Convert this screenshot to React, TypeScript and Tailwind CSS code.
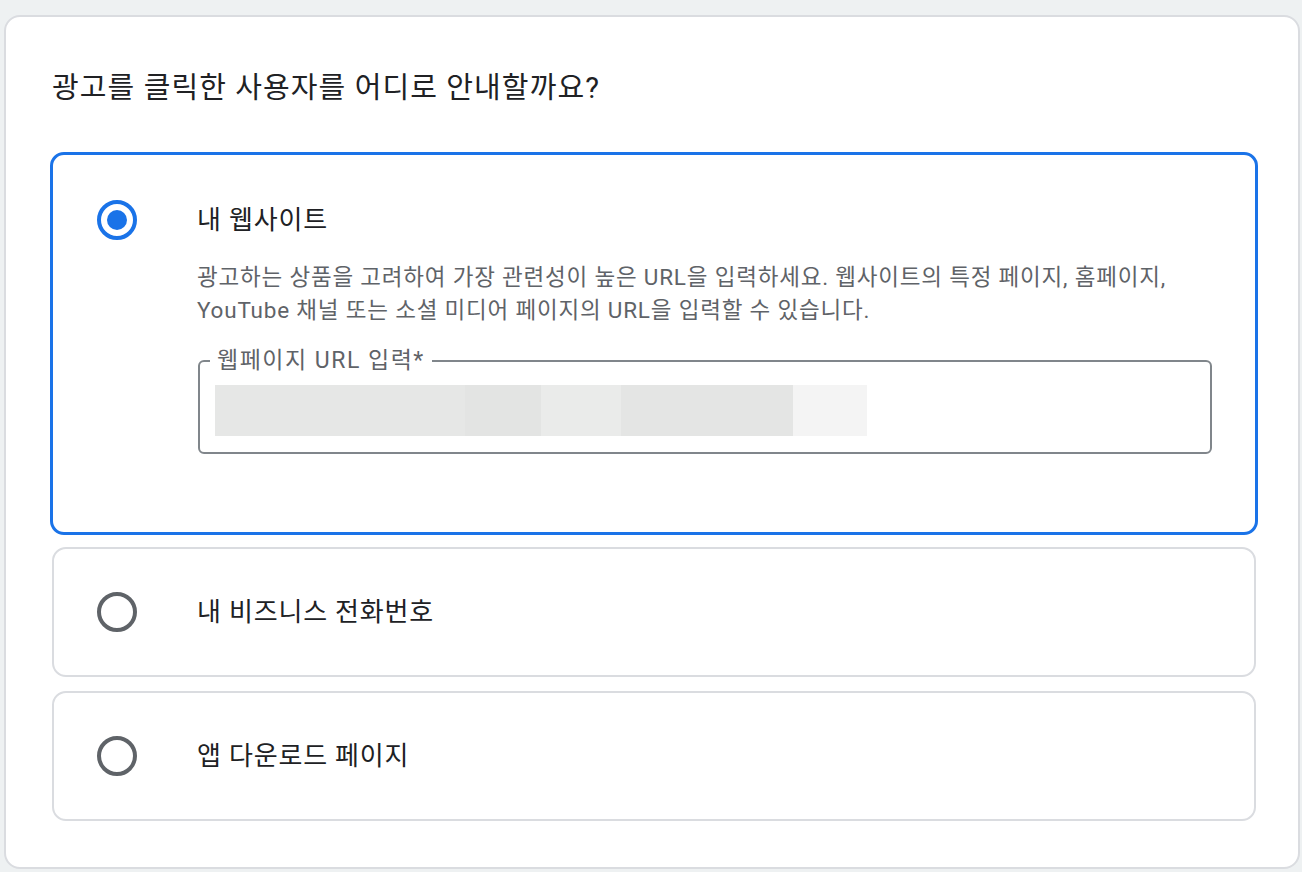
const FONT = { fontFamily: 'Roboto, "Noto Sans CJK KR", sans-serif' };

function Radio({ checked }: { checked: boolean }) {
  return checked ? (
    <span className="flex h-10 w-10 shrink-0 items-center justify-center rounded-full border-4 border-[#1a73e8]">
      <span className="h-5 w-5 rounded-full bg-[#1a73e8]" />
    </span>
  ) : (
    <span className="h-10 w-10 shrink-0 rounded-full border-4 border-[#5f6368]" />
  );
}

function Option({ label }: { label: string }) {
  return (
    <div className="mx-[2px] flex h-[130px] items-center rounded-[14px] border-2 border-[#dadce0] pl-[43px]">
      <Radio checked={false} />
      <span className="ml-[60px] text-[26px] tracking-[0.8px] text-[#202124]">{label}</span>
    </div>
  );
}

export default function App() {
  return (
    <div className="min-h-[872px] bg-[#eef1f2] pl-[4px] pr-[2px] pt-[15px]" style={FONT}>
      <div className="rounded-[16px] border-2 border-[#dadce0] bg-white pb-[46px] pl-[44px] pr-[40px] pt-[55px]">
        <h2 className="pl-[2px] text-[29px] leading-[32px] tracking-[1.1px] text-[#202124]">
          광고를 클릭한 사용자를 어디로 안내할까요?
        </h2>

        <div className="mt-[48px] flex flex-col gap-[12px]">
          <div className="flex rounded-[14px] border-[3px] border-[#1a73e8] pb-[78px] pl-[44px] pr-[43px] pt-[45px]">
            <Radio checked />
            <div className="ml-[60px] flex flex-1 flex-col">
              <span className="text-[26px] leading-[40px] tracking-[0.8px] text-[#202124]">내 웹사이트</span>
              <p className="mt-[21px] whitespace-nowrap text-[22.5px] leading-[33px] tracking-[0.8px] text-[#5f6368]">
                광고하는 상품을 고려하여 가장 관련성이 높은 URL을 입력하세요. 웹사이트의 특정 페이지, 홈페이지,
                <br />
                YouTube 채널 또는 소셜 미디어 페이지의 URL을 입력할 수 있습니다.
              </p>
              <div className="relative ml-[1px] mt-[33px] h-[94px] rounded-[6px] border-2 border-[#80868b] pl-[15px] pt-[23px]">
                <span className="absolute left-[10px] top-[-15px] bg-white px-[7px] text-[23px] leading-[28px] tracking-[1.5px] text-[#5f6368]">
                  웹페이지 URL 입력*
                </span>
                <div className="flex h-[51px]">
                  <div className="w-[250px] bg-[#e6e7e6]" />
                  <div className="w-[76px] bg-[#e3e4e3]" />
                  <div className="w-[80px] bg-[#eaebea]" />
                  <div className="w-[172px] bg-[#e4e5e4]" />
                  <div className="w-[74px] bg-[#f4f4f4]" />
                </div>
              </div>
            </div>
          </div>

          <Option label="내 비즈니스 전화번호" />
          <div className="mt-[2px]">
            <Option label="앱 다운로드 페이지" />
          </div>
        </div>
      </div>
    </div>
  );
}
